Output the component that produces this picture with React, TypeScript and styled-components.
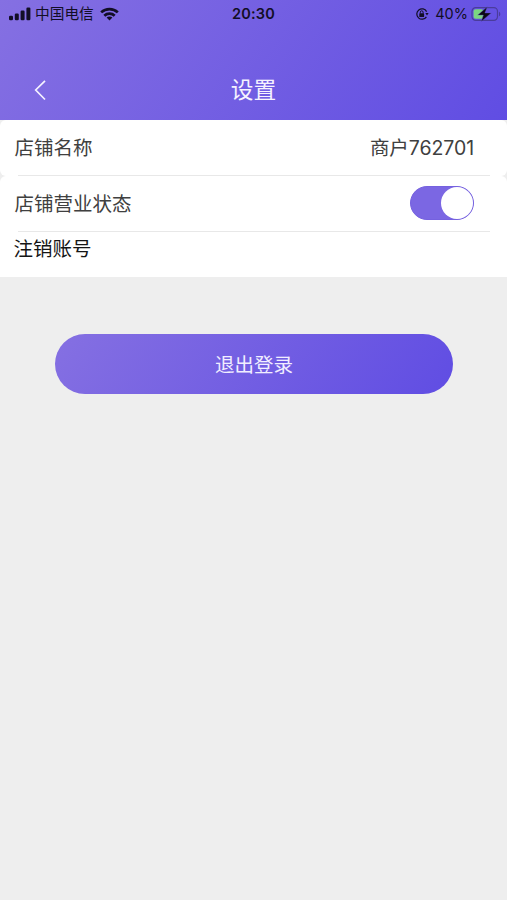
import React, { useState } from "react";
import styled, { createGlobalStyle } from "styled-components";

const GlobalStyle = createGlobalStyle`
  * { box-sizing: border-box; }
  body { margin: 0; background: #eeeeee; }
`;

const brandGradient = "linear-gradient(125deg, #8570e2 0%, #604de3 100%)";

const Page = styled.main`
  width: 507px;
  min-height: 900px;
  background: #eeeeee;
  color: #404040;
  font-family: Inter, "Noto Sans CJK SC", sans-serif;
`;

const Header = styled.header`
  height: 119.5px;
  background: ${brandGradient};
`;

const StatusBar = styled.div`
  height: 28px;
  padding: 0 5px 0 9px;
  display: grid;
  grid-template-columns: 1fr auto 1fr;
  align-items: center;
  color: #120e26;
`;

const StatusGroup = styled.div<{ $end?: boolean }>`
  display: flex;
  align-items: center;
  justify-content: ${(p) => (p.$end ? "flex-end" : "flex-start")};
  height: 28px;
`;

const Carrier = styled.span`
  margin: 0 6px 0 4px;
  font-size: 14.7px;
  line-height: 28px;
`;

const Clock = styled.time`
  font-size: 14.5px;
  font-weight: 600;
  letter-spacing: 0.15px;
  line-height: 28px;
  margin-right: 4px;
`;

const BatteryLevel = styled.span`
  margin: 0 3px 0 6px;
  font-size: 14.5px;
  line-height: 28px;
`;

const NavBar = styled.nav`
  height: 91.5px;
  padding: 32px 33px 0;
  display: grid;
  grid-template-columns: 1fr auto 1fr;
  align-items: center;
`;

const BackButton = styled.button`
  width: 16px;
  height: 22px;
  padding: 0;
  border: 0;
  background: none;
  display: flex;
`;

const Title = styled.h1`
  margin: 0;
  color: #f5f2ff;
  font-size: 22.7px;
  font-weight: 400;
  line-height: 30px;
`;

const Card = styled.section<{ $squareBottom?: boolean }>`
  background: #ffffff;
  border-radius: ${(p) => (p.$squareBottom ? "6px 6px 0 0" : "6px")};
`;

const Row = styled.div`
  height: 56.3px;
  padding: 0 33px 0 14.5px;
  display: flex;
  align-items: center;
  justify-content: space-between;
  background: linear-gradient(#e8e8e8, #e8e8e8) 18px 100% / 472px 1.3px no-repeat;
  font-size: 19.5px;
  line-height: 28px;
`;

const PlainRow = styled.div`
  height: 45px;
  padding: 3px 13.5px 0;
  color: #151515;
  font-size: 19.5px;
  line-height: 28px;
`;

const Value = styled.span`
  letter-spacing: -0.08px;
`;

const Toggle = styled.button<{ $on: boolean }>`
  width: 64px;
  height: 34px;
  margin: 0 0 1px;
  padding: 0;
  border: 1.3px solid ${(p) => (p.$on ? "#7561df" : "#dfdfdf")};
  border-radius: 17px;
  background: ${(p) => (p.$on ? "#7b67e3" : "#dfdfdf")};
  display: flex;
  align-items: center;
  justify-content: ${(p) => (p.$on ? "flex-end" : "flex-start")};
`;

const Thumb = styled.span`
  width: 32px;
  height: 32px;
  border-radius: 50%;
  background: #ffffff;
`;

const Actions = styled.div`
  padding: 57px 54px 0 55px;
`;

const LogoutButton = styled.button`
  width: 100%;
  height: 60px;
  padding: 2px 0 0;
  border: 0;
  border-radius: 30px;
  background: ${brandGradient};
  color: #f1eeff;
  font-family: inherit;
  font-size: 19.5px;
  line-height: 28px;
`;

const SignalIcon = () => (
  <svg width="22" height="14" viewBox="0 0 22 14" fill="currentColor">
    <rect x="0" y="8.8" width="4" height="4.4" rx="1.2" />
    <rect x="5.8" y="6.5" width="4" height="6.7" rx="1.2" />
    <rect x="11.6" y="3.6" width="4" height="9.6" rx="1.2" />
    <rect x="17.4" y="0.5" width="4" height="12.7" rx="1.2" />
  </svg>
);

const WifiIcon = () => (
  <svg width="19" height="14" viewBox="0 0 19 14" fill="none" stroke="currentColor" strokeWidth="2.7">
    <path d="M1.2 5.4C5.8 .9 13.2 .9 17.8 5.4" />
    <path d="M4.3 8.8c2.9-2.8 7.5-2.8 10.4 0" />
    <path d="M9.5 13.5 6.6 10.6c1.6-1.5 4.2-1.5 5.8 0Z" fill="currentColor" stroke="none" />
  </svg>
);

const RotationLockIcon = () => (
  <svg width="14" height="14" viewBox="0 0 14 14" fill="none" stroke="currentColor">
    <path d="M11.4 9.8A5.2 5.2 0 1 1 11.6 4.6" strokeWidth="1.25" />
    <path d="m10.3 6 3.3 0-1.6 2.5Z" fill="currentColor" stroke="none" />
    <rect x="4.3" y="6.3" width="4.8" height="3.7" rx=".6" fill="currentColor" stroke="none" />
    <path d="M5.3 6.5V5.2a1.4 1.4 0 0 1 2.8 0v1.3" strokeWidth="1" />
  </svg>
);

const BatteryIcon = () => (
  <svg width="31" height="16" viewBox="0 0 31 16">
    <rect x="1" y="1.7" width="25.5" height="12.6" rx="3.7" fill="none" stroke="#4a3c9b" strokeWidth="1.2" />
    <path d="M28 5.7c1.7.6 1.7 4 0 4.6Z" fill="#4a3c9b" />
    <rect x="2.6" y="3.3" width="9.8" height="9.4" rx="2" fill="#7bd681" />
    <path d="M16.3.7 6.8 9.1h5.6L10.3 15.4 20.2 6.9h-6.3Z" fill="#0b0914" stroke="#6655c8" strokeWidth=".4" />
  </svg>
);

const BackIcon = () => (
  <svg width="16" height="22" viewBox="0 0 16 22" fill="none" stroke="#f5f2ff" strokeWidth="1.7">
    <path d="M12 1.8 2.7 11 12 20.5" />
  </svg>
);

export default function App() {
  const [open, setOpen] = useState(true);

  return (
    <>
      <GlobalStyle />
      <Page>
        <Header>
          <StatusBar>
            <StatusGroup>
              <SignalIcon />
              <Carrier>中国电信</Carrier>
              <WifiIcon />
            </StatusGroup>
            <Clock>20:30</Clock>
            <StatusGroup $end>
              <RotationLockIcon />
              <BatteryLevel>40%</BatteryLevel>
              <BatteryIcon />
            </StatusGroup>
          </StatusBar>
          <NavBar>
            <BackButton aria-label="返回">
              <BackIcon />
            </BackButton>
            <Title>设置</Title>
          </NavBar>
        </Header>
        <Card>
          <Row>
            <span>店铺名称</span>
            <Value>商户762701</Value>
          </Row>
        </Card>
        <Card $squareBottom>
          <Row>
            <span>店铺营业状态</span>
            <Toggle $on={open} role="switch" aria-checked={open} onClick={() => setOpen(!open)}>
              <Thumb />
            </Toggle>
          </Row>
          <PlainRow>注销账号</PlainRow>
        </Card>
        <Actions>
          <LogoutButton>退出登录</LogoutButton>
        </Actions>
      </Page>
    </>
  );
}
